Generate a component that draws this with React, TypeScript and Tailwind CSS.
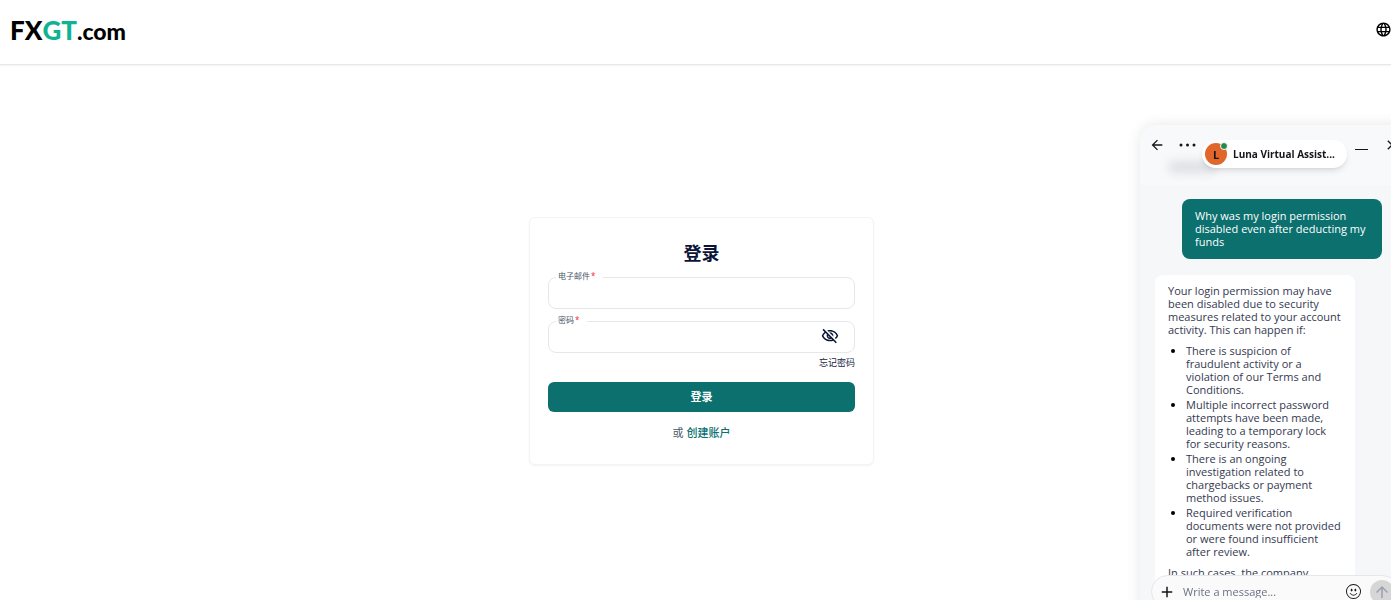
import type { ReactNode } from "react";
import {
  MdAdd,
  MdArrowBack,
  MdArrowUpward,
  MdClose,
  MdLanguage,
  MdOutlineVisibilityOff,
} from "react-icons/md";
import { BsEmojiSmile } from "react-icons/bs";

const reasons = [
  "There is suspicion of fraudulent activity or a violation of our Terms and Conditions.",
  "Multiple incorrect password attempts have been made, leading to a temporary lock for security reasons.",
  "There is an ongoing investigation related to chargebacks or payment method issues.",
  "Required verification documents were not provided or were found insufficient after review.",
];

type FieldProps = {
  id: string;
  label: string;
  type: string;
  children?: ReactNode;
};

const Field = ({ id, label, type, children }: FieldProps) => (
  <div className="relative">
    <label
      htmlFor={id}
      className="absolute -top-[7px] left-2 bg-white pl-[2px] pr-2 text-[8px] leading-[12px] text-gray-600"
    >
      {label}
      <span className="ml-px text-red-500">*</span>
    </label>
    <input
      id={id}
      type={type}
      className="block h-8 w-full rounded-lg border border-gray-200 px-3 text-xs outline-none"
    />
    {children}
  </div>
);

const Header = () => (
  <header className="flex h-[65px] items-start justify-between border-b border-gray-200 pl-[10px] pt-3 shadow-xs">
    <a
      href="#"
      className="flex items-baseline font-['Lato',sans-serif] text-[26px] leading-[36px] font-black text-black"
    >
      <span>FX</span>
      <span className="text-[#10b391]">GT</span>
      <span className="text-[23px] leading-[36px]">.com</span>
    </a>
    <button type="button" aria-label="Language" className="-mr-px mt-[9px] shrink-0 text-black">
      <MdLanguage className="size-[17px]" />
    </button>
  </header>
);

const LoginCard = () => (
  <form className="w-[345px] rounded-md border border-gray-100 bg-white px-[18px] pt-[22px] pb-[23px] shadow-xs">
    <h1 className="text-center text-lg leading-[26px] font-bold text-[#0b1437]">登录</h1>
    <div className="mt-[11px] flex flex-col gap-3">
      <Field id="email" label="电子邮件" type="email" />
      <Field id="password" label="密码" type="password">
        <button
          type="button"
          aria-label="显示密码"
          className="absolute top-[6px] right-4 text-[#0b1437]"
        >
          <MdOutlineVisibilityOff className="size-[18px]" />
        </button>
      </Field>
    </div>
    <div className="mt-[3px] text-right text-[9px] leading-[14px] text-[#1b2340]">
      <a href="#">忘记密码</a>
    </div>
    <button
      type="submit"
      className="mt-3 block h-[30px] w-full rounded-md bg-[#0b706e] text-[11px] font-bold text-white"
    >
      登录
    </button>
    <p className="mt-[13px] text-center text-[11px] leading-4 text-gray-600">
      或{" "}
      <a href="#" className="font-medium text-[#0b706e]">
        创建账户
      </a>
    </p>
  </form>
);

const ChatHeader = () => (
  <div className="relative flex h-[60px] shrink-0 items-start rounded-tl-2xl bg-[#f8f9fa] px-[9px] pt-3 text-[#14161a]">
    <div className="absolute top-9 left-7 h-3 w-12 rounded-full bg-gray-300/70 blur-[5px]" />
    <button type="button" aria-label="Back">
      <MdArrowBack className="size-4" />
    </button>
    <button type="button" aria-label="More options" className="ml-[14px] flex h-4 items-center">
      <svg viewBox="0 0 17 4" className="h-1 w-[17px]" fill="currentColor">
        <circle cx="2" cy="2" r="1.5" />
        <circle cx="8.5" cy="2" r="1.5" />
        <circle cx="15" cy="2" r="1.5" />
      </svg>
    </button>
    <div className="relative mt-[3px] ml-[6px] flex h-7 w-[145px] shrink-0 items-center rounded-full bg-white pl-[3px] shadow-md">
      <div className="relative flex size-[22px] shrink-0 items-center justify-center rounded-full bg-[#e0662c] text-[11px] font-bold">
        L
        <span className="absolute -top-px -right-px size-2 rounded-full border border-white bg-[#23894f]" />
      </div>
      <span className="ml-[6px] text-[10px] font-bold whitespace-nowrap">Luna Virtual Assist...</span>
    </div>
    <button type="button" aria-label="Minimize" className="mt-3 ml-2 h-px w-[13px] shrink-0 bg-[#14161a]" />
    <button type="button" aria-label="Close" className="ml-4 shrink-0">
      <MdClose className="size-4" />
    </button>
  </div>
);

const ChatWidget = () => (
  <aside className="fixed top-[125px] -right-3 -bottom-4 flex w-[263px] flex-col overflow-hidden rounded-tl-2xl bg-[#f6f7f9] font-['Open_Sans',sans-serif] text-[11px] leading-[13px] shadow-[0_0_14px_rgba(0,0,0,0.1)]">
    <ChatHeader />
    <div className="flex flex-1 flex-col gap-4 overflow-hidden pt-[14px] pr-[21px] pl-[15px]">
      <p className="w-[200px] shrink-0 self-end rounded-lg bg-[#0b706e] pt-[10px] pr-2 pb-[11px] pl-[13px] font-medium text-white">
        Why was my login permission disabled even after deducting my funds
      </p>
      <div className="w-[200px] shrink-0 rounded-lg bg-white px-[13px] pt-[9px] pb-12 text-[#343950]">
        <p>
          Your login permission may have been disabled due to security measures related to your
          account activity. This can happen if:
        </p>
        <ul className="mt-2 flex list-disc flex-col gap-[2px] pl-[18px] marker:text-black">
          {reasons.map((reason) => (
            <li key={reason}>{reason}</li>
          ))}
        </ul>
        <p className="mt-2">In such cases, the company</p>
      </div>
    </div>
    <div className="absolute right-1 bottom-2 left-[11px] flex h-[33px] items-center rounded-full border border-gray-200 bg-[#fafafa] pr-1 pl-[6px] text-[#14161a]">
      <button type="button" aria-label="Attach" className="shrink-0">
        <MdAdd className="size-[18px]" />
      </button>
      <input
        type="text"
        aria-label="Message"
        placeholder="Write a message..."
        className="ml-[7px] min-w-0 flex-1 bg-transparent outline-none placeholder:text-gray-500"
      />
      <button type="button" aria-label="Emoji" className="mr-[9px] shrink-0">
        <BsEmojiSmile className="size-[15px]" />
      </button>
      <button
        type="button"
        aria-label="Send"
        className="flex size-6 shrink-0 items-center justify-center rounded-full bg-[#d6d6d6] text-gray-400"
      >
        <MdArrowUpward className="size-[18px]" />
      </button>
    </div>
  </aside>
);

export default function App() {
  return (
    <div className="min-h-screen bg-white font-['Noto_Sans','Noto_Sans_CJK_SC',sans-serif]">
      <Header />
      <main className="flex justify-center pt-[152px] pl-3">
        <LoginCard />
      </main>
      <ChatWidget />
    </div>
  );
}
